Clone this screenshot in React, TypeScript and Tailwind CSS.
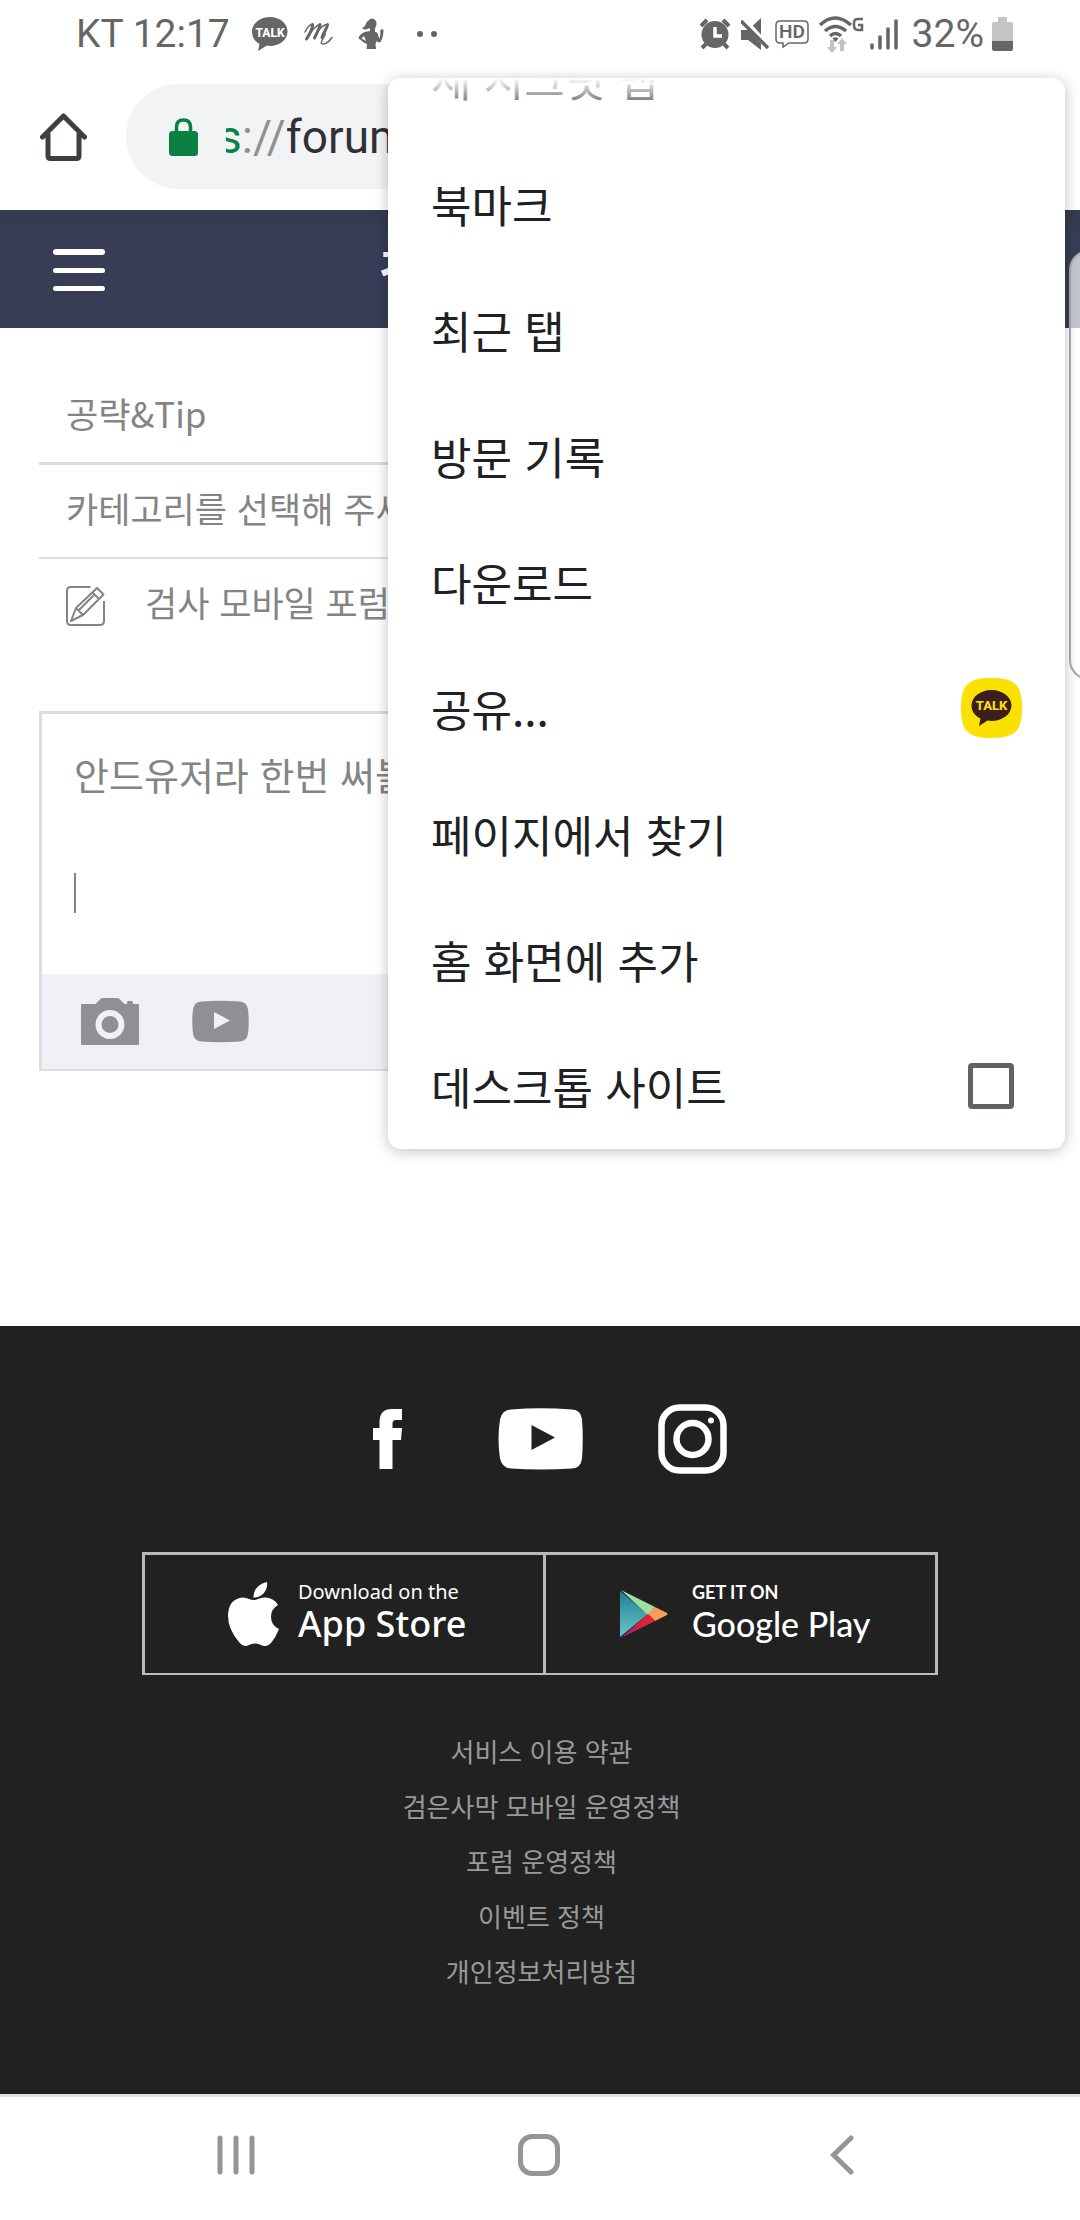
import type { ReactNode } from "react";

const menuItems = ["새 시크릿 탭", "북마크", "최근 탭", "방문 기록", "다운로드"];
const menuItemsAfterShare = ["페이지에서 찾기", "홈 화면에 추가"];
const policyLinks = [
  "서비스 이용 약관",
  "검은사막 모바일 운영정책",
  "포럼 운영정책",
  "이벤트 정책",
  "개인정보처리방침",
];

function StatusBar() {
  return (
    <header className="flex h-[68px] items-center justify-between pl-[76px] pr-[67px] font-[Roboto,sans-serif] text-[39px] text-[#666666]">
      <div className="flex items-center">
        <span>KT 12:17</span>
        <svg className="ml-[22px] h-[34px] w-9" viewBox="0 0 36 34" aria-hidden="true">
          <path
            d="M18 0C8 0 0 6.500 0 14.500c0 6 3 10 7.500 12.500L6 34l9-5.500c1 .3 2 .5 3 .5 10 0 17.500-6.500 17.500-14.500S28 0 18 0z"
            fill="#666666"
          />
          <text x="18" y="20" textAnchor="middle" fontSize="12" fontWeight="800" fill="#fff" fontFamily="Roboto">
            TALK
          </text>
        </svg>
        <svg className="ml-4 h-6 w-[30px]" viewBox="0 0 30 24" aria-hidden="true" fill="none" stroke="#666666" strokeLinecap="round" strokeLinejoin="round">
          <path strokeWidth="1.500" d="M1 10C4 4 7 2 8.500 2.500M21.500 12c-3 5-5 8-4 9.500 2 1.500 7-.5 10.500-6" />
          <path strokeWidth="3" d="M8.500 2.500C9 5 6 12 2.500 17M16 2.500C16 5 13 11 10.500 16M23.500 2.500c0 3-4 8-5.500 13" />
          <path strokeWidth="1.500" d="M4 14C9 7 13 2.500 16 2.500M11.500 13C15 7 20 2 23.500 2.500" />
        </svg>
        <svg className="ml-6 h-8 w-[26px]" viewBox="0 0 26 32" aria-hidden="true" fill="#666666">
          <ellipse cx="14" cy="6" rx="4.500" ry="5.500" />
          <path d="M10 3C7 5 8 9 4 10c3 3 7 1 8-2zM12 10h5v4c2 0 3 1 3 3l1.500 4 1-6c-1-1 0-3 1-4l2 1c0 4-1 9-3 12-2 1-3 0-4-1l-1 3 .5 5H8.500l.5-5c-3-1-6-4-8.500-5.500C1 17 5 14 9 13.500l3-.5zM6 18l-2.500 2.500L8 23z" fillRule="evenodd" />
        </svg>
        <span className="ml-[33px] size-[6px] rounded-full bg-[#666666]" />
        <span className="ml-2 size-[6px] rounded-full bg-[#666666]" />
      </div>

      <div className="flex items-center">
        <svg className="h-8 w-8" viewBox="0 0 32 32" aria-hidden="true">
          <path d="M2 8l6-6M24 2l6 6M7 26l-4 4M25 26l4 4" stroke="#666666" strokeWidth="4" />
          <circle cx="16" cy="16.500" r="13.500" fill="#666666" />
          <path d="M16 9v9h7" fill="none" stroke="#fff" strokeWidth="3.500" />
        </svg>
        <svg className="ml-[10px] h-8 w-7" viewBox="0 0 28 32" aria-hidden="true">
          <path d="M0 12h7L20 0v32L7 22H0z" fill="#666666" />
          <path d="M1 0l27 30" stroke="#fff" strokeWidth="6" />
          <path d="M0 3l27 27" stroke="#666666" strokeWidth="3.500" />
        </svg>
        <svg className="ml-[6px] h-[30px] w-[34px]" viewBox="0 0 34 30" aria-hidden="true">
          <path d="M5 2h24q4 0 4 4v14q0 4-4 4H14l-6 4v-4H5q-4 0-4-4V6q0-4 4-4z" fill="none" stroke="#666666" strokeWidth="1.500" />
          <text x="17" y="19" textAnchor="middle" fontSize="19" fontWeight="600" fill="#666666" fontFamily="Roboto">
            HD
          </text>
        </svg>
        <svg className="ml-[10px] h-[38px] w-[46px]" viewBox="0 0 46 38" aria-hidden="true">
          <g fill="none" stroke="#666666" strokeWidth="3.500">
            <path d="M1 10q15-14 31 0M6 16q10.500-9 21 0M11 21q5.500-5 11 0" />
            <path d="M13.500 23.500q3-2.500 6 0L16.500 27z" fill="#666666" stroke="none" />
          </g>
          <g fill="#c2c2c2">
            <path d="M11 25h4v7h3l-5 6-5-6h3zM21 36h4v-7h3l-5-6-5 6h3z" />
          </g>
          <path d="M44 4h-5q-4 0-4 4v2q0 5 4 5h4V10h-4" fill="none" stroke="#666666" strokeWidth="2.500" />
        </svg>
        <svg className="ml-[5px] h-[31px] w-7" viewBox="0 0 28 31" aria-hidden="true" stroke="#666666" strokeWidth="3.500" strokeLinecap="round">
          <path d="M2 26v3M10 18v11M18 10v19M26 2v27" />
        </svg>
        <span className="ml-[14px]">32%</span>
        <svg className="ml-2 h-[34px] w-[21px]" viewBox="0 0 21 34" aria-hidden="true">
          <path d="M6 0h9v5h4q2 0 2 2v17H0V7q0-2 2-2h4z" fill="#c4c4c4" />
          <path d="M0 24h21v8q0 2-2 2H2q-2 0-2-2z" fill="#666666" />
        </svg>
      </div>
    </header>
  );
}

function BrowserBar() {
  return (
    <div className="flex items-center gap-[39px] pb-[21px] pl-10 pr-10 pt-4">
      <button type="button" aria-label="홈" className="shrink-0">
        <svg className="h-[48px] w-[47px]" viewBox="0 0 47 48" fill="none" stroke="#3c4043" strokeWidth="5" strokeLinejoin="round" strokeLinecap="round">
          <path d="M2.500 24L23.500 3l21 21M8 21v22q0 2.500 2.500 2.500h26Q39 45.500 39 43V21" />
        </svg>
      </button>
      <div className="flex h-[105px] flex-1 items-center overflow-hidden rounded-full bg-[#f1f3f4] pl-[43px]">
        <svg className="h-[38px] w-[29px] shrink-0" viewBox="0 0 29 38" aria-hidden="true">
          <path d="M7.500 14V9q0-7 7-7t7 7v5" fill="none" stroke="#0b8043" strokeWidth="3.500" />
          <rect y="13" width="29" height="25" rx="3.500" fill="#0b8043" />
        </svg>
        <div className="ml-7 flex flex-1 overflow-hidden whitespace-nowrap pt-[2px] font-[Roboto,sans-serif] text-[46px] text-[#303134]">
          <span className="-ml-2">
            <span className="text-[#0b8043]">s</span>
            <span className="text-[#8f9193]">://</span>forum.blackdesertm.com
          </span>
        </div>
      </div>
    </div>
  );
}

function SiteHeader() {
  return (
    <div className="grid h-[118px] grid-cols-[1fr_auto_1fr] items-center bg-linear-to-b from-[#353b4e] to-[#363d55] to-25% px-[53px]">
      <button type="button" aria-label="메뉴" className="flex w-[52px] flex-col gap-[13px] pt-[2px]">
        <span className="h-[6px] rounded-full bg-white" />
        <span className="h-[5px] rounded-full bg-white" />
        <span className="h-[5px] rounded-full bg-white" />
      </button>
      <h1 className="text-[48px] font-bold leading-none text-white">검은사막 모바일</h1>
    </div>
  );
}

function PostForm() {
  return (
    <form className="mx-[39px] mt-[42px] text-[35px] text-[#848484]">
      <select
        aria-label="게시판"
        className="block h-[95px] w-full appearance-none border-b-3 border-[#dddddd] bg-white pb-[6px] pl-[27px]"
      >
        <option>공략&amp;Tip</option>
      </select>
      <select
        aria-label="카테고리"
        className="block h-[94px] w-full appearance-none border-b-2 border-[#dddddd] bg-white pb-[6px] pl-[27px]"
      >
        <option>카테고리를 선택해 주세요.</option>
      </select>
      <label className="flex h-[93px] items-center gap-10 pl-[27px]">
        <svg className="h-10 w-[39px] shrink-0" viewBox="0 0 39 40" fill="none" stroke="#848484" strokeWidth="2" strokeLinejoin="round" aria-hidden="true">
          <path d="M24.500 1H5Q1 1 1 5v30q0 4 4 4h29q4 0 4-4V15" />
          <path d="M5 35l5-13L31 2l6.500 6.500L17 29zM10 22l7 7M26.500 6.500L33 13M12 25l16-16" />
        </svg>
        <input
          type="text"
          aria-label="제목"
          defaultValue="검사 모바일 포럼"
          className="min-w-0 flex-1 bg-transparent pb-[6px] outline-none"
        />
      </label>

      <div className="mt-[59px] border-3 border-b-2 border-[#dddddd]">
        <div className="h-[260px] pl-8 pt-[31px]">
          <textarea
            aria-label="내용"
            rows={1}
            defaultValue="안드유저라 한번 써볼게요"
            className="block h-[58px] w-full resize-none overflow-hidden text-[38px] leading-[58px] outline-none"
          />
          <span className="mt-[70px] block h-10 w-[2px] bg-[#848484]" />
        </div>
        <div className="flex h-[95px] items-center gap-[53px] bg-[#f0f1f6] pl-[39px]">
          <button type="button" aria-label="사진 첨부">
            <svg className="h-[47px] w-[58px]" viewBox="0 0 58 47" fill="#8f9094">
              <path d="M0 7q0-1 1-1h13.500l5-5q1-1 2-1h15q1 0 2 1l5 5h2.500V4.500Q46 3 47.500 3h3Q52 3 52 4.500V6h5q1 0 1 1v39q0 1-1 1H1q-1 0-1-1z" />
              <circle cx="29" cy="26.500" r="11.500" fill="none" stroke="#f0f1f6" strokeWidth="6" />
            </svg>
          </button>
          <button type="button" aria-label="동영상 첨부">
            <svg className="h-[43px] w-[57px]" viewBox="0 0 57 43">
              <path d="M9 1.500Q28 0 48 1.500q7 .5 8 8 1.500 12 0 24-1 7.500-8 8-20 1.500-39 0-7-.5-8-8-1.500-12 0-24 1-7.500 8-8z" fill="#8f9094" />
              <path d="M22 12v17l16-8.500z" fill="#f0f1f6" />
            </svg>
          </button>
        </div>
      </div>
    </form>
  );
}

function SiteFooter() {
  return (
    <footer className="mt-[255px] flex flex-1 flex-col items-center bg-[#212121] pb-[95px] pt-[78px]">
      <div className="flex items-center gap-[72px]">
        <a href="#facebook" aria-label="Facebook" className="flex w-[76px] justify-center">
          <svg className="h-[60px] w-[29px]" viewBox="0 0 29 60" fill="#fff">
            <path d="M29 0v11h-6q-3.500 0-3.500 3.500V19H29l-1 12h-8.500v29h-13V31H0V19h6.500v-6Q6.500 0 19 0z" />
          </svg>
        </a>
        <a href="#youtube" aria-label="YouTube">
          <svg className="h-[62px] w-[85px]" viewBox="0 0 85 62">
            <path d="M13 1.500Q42-1 74 1.500q9 .5 10 10 1.500 19 0 39-1 9.500-10 10-32 2-61 0-9-.5-11-10-3-20 0-39 2-9.500 11-10z" fill="#fff" />
            <path d="M33.500 17v25L57 29.500z" fill="#212121" />
          </svg>
        </a>
        <a href="#instagram" aria-label="Instagram" className="flex w-[76px] justify-center">
          <svg className="h-[70px] w-[69px]" viewBox="0 0 69 70" fill="none" stroke="#fff" strokeWidth="6.500">
            <rect x="3.500" y="3.500" width="62" height="63" rx="18" />
            <circle cx="34.500" cy="35" r="16" />
            <circle cx="53" cy="16.500" r="3" fill="#fff" stroke="none" />
          </svg>
        </a>
      </div>

      <div className="mt-[78px] grid w-[796px] max-w-full grid-cols-[401fr_389fr] divide-x-3 divide-[#bbbbbb] border-3 border-b-2 border-[#bbbbbb] text-white">
        <a href="#app-store" className="flex h-[118px] items-center gap-[19px] pl-[83px]">
          <svg className="h-[64px] w-[51px]" viewBox="0 0 51 64" fill="#fff" aria-hidden="true">
            <path d="M39 0q1 6-3.500 11.500Q31 16 25.500 15.500 25 9.500 29.500 5 33.500 1 39 0zM50 23q-7 4-7 11.500 0 9 8 12.500-3 8-8 14-3 3.500-7 3-2-.5-4-1.500-5-2-10 0-2 1-4 1.500-4 0-7-4Q0 47 0 34 0 17 15 15.500q3 0 6 1.500 4.500 2 9 0 4-2 8-1.500 8 .5 12 7.500z" />
          </svg>
          <span className="flex flex-col pb-1 font-['Noto_Sans',sans-serif]">
            <span className="text-[20px] leading-6">Download on the</span>
            <span className="text-[36px] font-medium leading-10">App Store</span>
          </span>
        </a>
        <a href="#google-play" className="flex h-[118px] items-center gap-6 pl-[74px]">
          <svg className="h-12 w-12" viewBox="0 0 48 48" aria-hidden="true">
            <defs>
              <linearGradient id="playBlue" x1="0" y1="0" x2="0" y2="1">
                <stop offset="0" stopColor="#1c7f95" />
                <stop offset="1" stopColor="#6fc4cc" />
              </linearGradient>
              <linearGradient id="playRed" x1="1" y1="0" x2="0" y2="1">
                <stop offset="0.4" stopColor="#e2213a" />
                <stop offset="1" stopColor="#7b2a86" />
              </linearGradient>
            </defs>
            <path d="M0 1v46l28-23z" fill="url(#playBlue)" />
            <path d="M1 0l34 17-7 8z" fill="#9fe0a0" />
            <path d="M35 17l12 6q1 1 0 2l-12 6-7-7z" fill="#fb9a5b" />
            <path d="M1 48l34-17-7-7z" fill="url(#playRed)" />
          </svg>
          <span className="flex flex-col pb-1 font-[Lato,sans-serif]">
            <span className="text-[18px] font-bold leading-6">GET IT ON</span>
            <span className="text-[34px] font-medium leading-10">Google Play</span>
          </span>
        </a>
      </div>

      <nav className="mt-12 flex flex-col items-center pl-[3px] text-[26px] leading-[55px] text-[#999999]">
        {policyLinks.map((label) => (
          <a key={label} href="#policy">
            {label}
          </a>
        ))}
      </nav>
    </footer>
  );
}

function NavigationBar() {
  return (
    <nav className="grid h-[126px] grid-cols-3 items-center border-t-3 border-[#e0e0e0] bg-white pb-[7px] pl-[84px] pr-[87px]">
      <button type="button" aria-label="최근 앱" className="justify-self-center">
        <svg className="h-10 w-[38px]" viewBox="0 0 38 40" stroke="#959595" strokeWidth="5" strokeLinecap="round">
          <path d="M3 3v34M19 3v34M35 3v34" />
        </svg>
      </button>
      <button type="button" aria-label="홈 화면" className="size-[42px] justify-self-center rounded-[14px] border-5 border-[#959595]" />
      <button type="button" aria-label="뒤로" className="justify-self-center">
        <svg className="h-10 w-6" viewBox="0 0 24 40" fill="none" stroke="#959595" strokeWidth="5" strokeLinecap="round">
          <path d="M21 3L3.500 20 21 37" />
        </svg>
      </button>
    </nav>
  );
}

function MenuItem({ label, children }: { label: string; children?: ReactNode }) {
  return (
    <button type="button" role="menuitem" className="flex h-[126px] w-full shrink-0 items-center justify-between pl-[43px] pr-[43px] text-left">
      {label}
      {children}
    </button>
  );
}

function BrowserMenu() {
  return (
    <div
      role="menu"
      className="absolute right-[15px] top-[78px] flex h-[1071px] w-[677px] flex-col justify-end overflow-hidden rounded-[13px] bg-white text-[44px] text-[#202124] shadow-[0_2px_14px_rgba(0,0,0,0.25)]"
    >
      {menuItems.map((label) => (
        <MenuItem key={label} label={label} />
      ))}
      <MenuItem label="공유...">
        <svg className="h-[60px] w-[61px]" viewBox="0 0 61 60" aria-hidden="true">
          <path d="M30.500 0C54 0 61 7 61 30s-7 30-30.500 30S0 53 0 30 7 0 30.500 0z" fill="#fae100" />
          <path d="M30.500 12c-11 0-20 7-20 15.500 0 6 3.500 10.500 9 13L18 48l8.500-5.500 4 .5c11 0 20-7 20-15.500S41.500 12 30.500 12z" fill="#3c1e1e" />
          <text x="30.500" y="32" textAnchor="middle" fontSize="13" fontWeight="800" fill="#fae100" fontFamily="Roboto">
            TALK
          </text>
        </svg>
      </MenuItem>
      {menuItemsAfterShare.map((label) => (
        <MenuItem key={label} label={label} />
      ))}
      <label className="flex h-[126px] w-full shrink-0 items-center justify-between pl-[43px] pr-[51px]">
        데스크톱 사이트
        <input type="checkbox" className="size-[46px] appearance-none rounded-[4px] border-5 border-[#5f6368]" />
      </label>
      <div className="absolute inset-x-0 top-0 h-10 bg-linear-to-b from-white to-white/0" />
    </div>
  );
}

export default function App() {
  return (
    <div lang="ko" className="relative flex min-h-screen flex-col overflow-hidden bg-white font-['Noto_Sans_CJK_KR',sans-serif]">
      <StatusBar />
      <BrowserBar />
      <SiteHeader />
      <PostForm />
      <SiteFooter />
      <NavigationBar />
      <div className="absolute -right-5 top-[250px] h-[430px] w-[31px] rounded-l-[20px] border-2 border-[#aaaaaa] bg-white/70" />
      <BrowserMenu />
    </div>
  );
}
